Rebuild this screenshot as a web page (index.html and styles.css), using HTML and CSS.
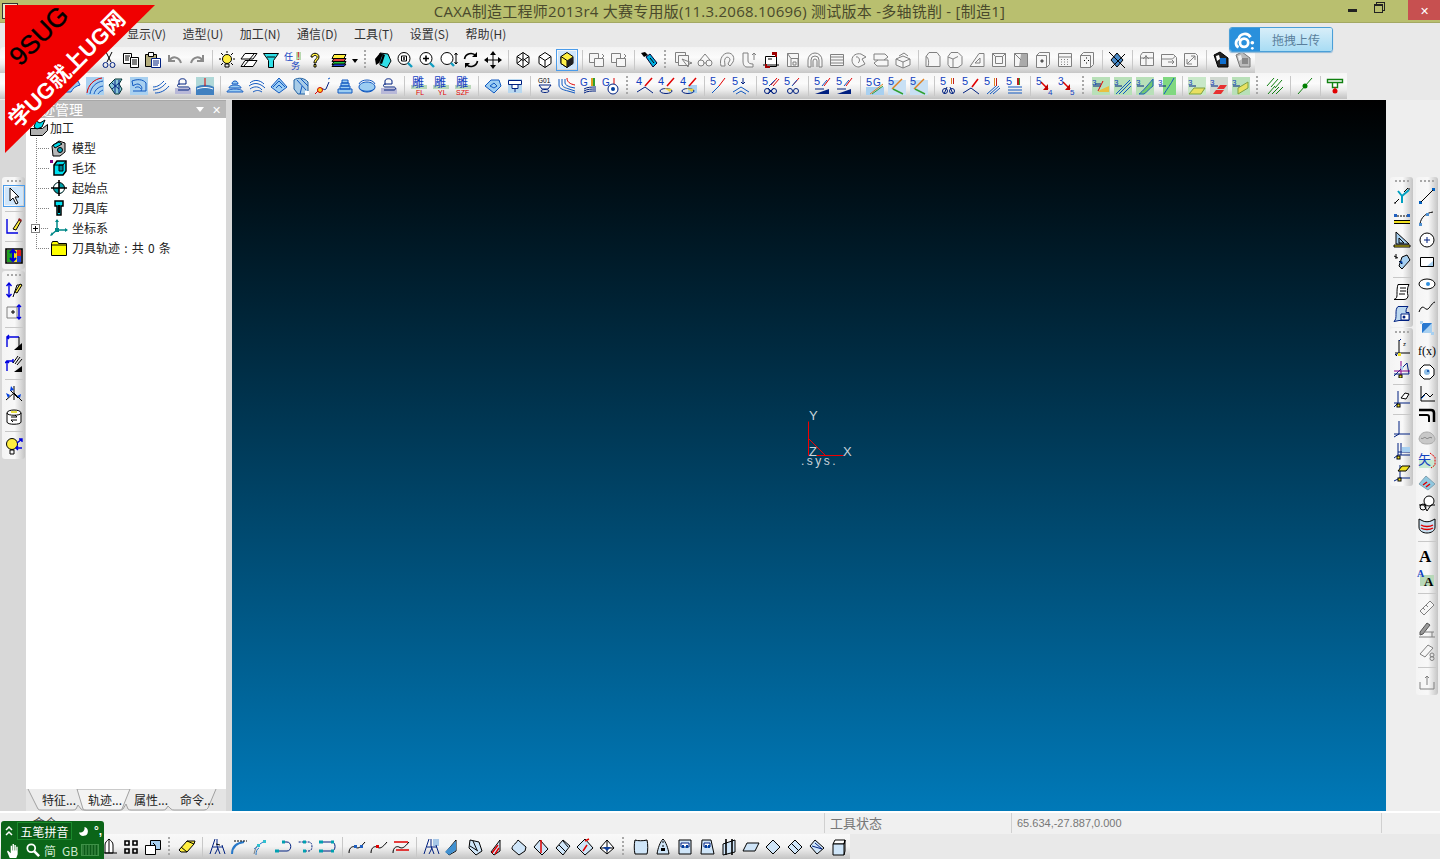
FILE: index.html
```html
<!DOCTYPE html>
<html lang="zh-CN">
<head>
<meta charset="utf-8">
<title>CAXA制造工程师2013r4</title>
<link rel="stylesheet" href="styles.css">
</head>
<body>
<svg class="defs" aria-hidden="true">
<symbol id="cut" viewBox="0 0 18 18"><path class="k" d="M7 11 12 1M11 11 6 1"/><circle class="nv" cx="5.5" cy="14" r="2.5"/><circle class="nv" cx="12.5" cy="14" r="2.5"/></symbol>
<symbol id="copy" viewBox="0 0 18 18"><path class="w" d="M1.5 2.5h8v10h-8z"/><path class="w" d="M8.5 6.5h8v10h-8z"/><path class="k" d="M3 5h5M3 7h4M3 9h4M10 9h5M10 11h5M10 13h5"/></symbol>
<symbol id="paste" viewBox="0 0 18 18"><path class="ol" d="M1.5 3.5h11v12h-11z"/><path class="w" d="M4.5 1.5h5v4h-5z"/><path class="nw" d="M7.5 7.5h9v9h-9z"/><path class="nv" d="M9 10h6M9 12h6M9 14h5"/></symbol>
<symbol id="undo" viewBox="0 0 18 18"><path class="gs2" d="M3 4v6h6M3.5 9.5C6 5 13 5 15 12"/></symbol>
<symbol id="redo" viewBox="0 0 18 18"><path class="gs2" d="M15 4v6H9M14.500 9.500C12 5 5 5 3 12"/></symbol>
<symbol id="bulb" viewBox="0 0 18 18"><circle class="y" cx="9" cy="8" r="4.500"/><path class="k" d="M7 13h4v3H7zM1 8h2M15 8h2M3 2l2 2M15 2l-2 2M3 14l2-2M15 14l-2-2M9 0v2"/></symbol>
<symbol id="zf" viewBox="0 0 18 18"><path class="w" d="M5 2.500h12L13 8H1z"/><path class="w" d="M5 9.500h12L13 15.500H1z"/><path class="k" d="M14 3 4 15"/></symbol>
<symbol id="fun" viewBox="0 0 18 18"><path class="c" d="M1.500 2.500h15l-5 7v7h-5v-7z"/><path class="k" d="M5 6h8"/></symbol>
<symbol id="task" viewBox="0 0 18 18"><rect x="12" y="1" width="5" height="8" fill="#b8d8b0"/></symbol>
<symbol id="help" viewBox="0 0 18 18"><path class="ty" d="M5 6c0-5 8-5 8 0 0 3-3 3-3 6H8c0-4 3-4 3-6s-4-2-4 0zM8 13.500h2v2.500H8z"/></symbol>
<symbol id="lay" viewBox="0 0 18 18"><path class="y" d="M4 3.500h12l-2 4H2z"/><path fill="#e04040" stroke="#000" d="M4 7.500h12l-2 3H2z"/><path fill="#20c040" stroke="#000" d="M4 10.500h12l-2 3H2z"/><path fill="#2040d0" stroke="#000" d="M4 13h12l-2 2.500H2z"/></symbol>
<symbol id="pan" viewBox="0 0 18 18"><path class="c" d="M6 2l8 1 3 7-4 7-7-3z"/><path fill="#000" d="M1 8l5-6 3 1-4 9-3 2zM9 3l2 1-3 9-2-1z"/></symbol>
<symbol id="zw" viewBox="0 0 18 18"><circle class="w" cx="8" cy="7.500" r="6"/><path class="k" d="M5.500 5h5v5h-5z"/><path fill="#444" d="M7 6h2v3H7z"/><path class="cb" d="M12 12l4 4"/></symbol>
<symbol id="zi" viewBox="0 0 18 18"><circle class="w" cx="8" cy="7.500" r="6"/><path class="k2" d="M5 7.500h6M8 4.500v6"/><path class="cb" d="M12 12l4 4"/></symbol>
<symbol id="zd" viewBox="0 0 18 18"><circle class="w" cx="7" cy="7.500" r="6"/><path class="cb" d="M11 12l3 3"/><path class="k" d="M16 2v11M14.500 4 16 2l1.500 2M14.500 11l1.500 2 1.500-2"/></symbol>
<symbol id="rot" viewBox="0 0 18 18"><path class="k2" d="M2.500 8A6.500 6.500 0 0 1 14 5M15.500 10A6.500 6.500 0 0 1 4 13"/><path d="M15 1v5h-5zM3 17v-5h5z"/></symbol>
<symbol id="mv" viewBox="0 0 18 18"><path class="k" d="M9 2v14M2 9h14"/><path d="M9 0l3 4H6zM9 18l3-4H6zM0 9l4-3v6zM18 9l-4-3v6z"/></symbol>
<symbol id="cw" viewBox="0 0 18 18"><path class="w" d="M9 1.500l6 4v7l-6 4-6-4v-7z"/><path class="k" d="M3 5.500l6 4 6-4M9 9.500v7M3 12.500l6-5 6 5M9 1.500v6"/></symbol>
<symbol id="ch" viewBox="0 0 18 18"><path class="w" d="M9 1.500l6 4v7l-6 4-6-4v-7z"/><path class="k" d="M3 5.500l6 4 6-4M9 9.500v7"/></symbol>
<symbol id="cs" viewBox="0 0 18 18"><path class="y" d="M9 1.500l6 4v7l-6 4-6-4v-7z"/><path fill="#fff24a" stroke="#000" d="M3 5.500l6 4v7l-6-4z"/><path fill="#202020" d="M9 9.500l6-4v7l-6 4z"/></symbol>
<symbol id="g2box" viewBox="0 0 18 18"><path class="gw" d="M1.500 2.500h9v9h-9z"/><path class="gw" d="M6.500 7.500h9v8h-9z"/><path class="gs" d="M14 3l2 2-2 2"/></symbol>
<symbol id="pen" viewBox="0 0 18 18"><path fill="#00b0e0" stroke="#003" d="M6 6l4-3 7 9-4 4z"/><path fill="#000" d="M1 2l4-1 3 3-4 2z"/><path class="k" d="M10 7l4 5"/></symbol>
<symbol id="g1" viewBox="0 0 18 18"><path class="gw" d="M1.500 1.500h10v10h-10z"/><path class="gw" d="M4.500 4.500h10v10h-10z"/><path class="gs" d="M8 8l6 8 1-3 3-1z"/></symbol>
<symbol id="g2" viewBox="0 0 18 18"><circle class="gw" cx="5" cy="12" r="3"/><circle class="gw" cx="13" cy="12" r="3"/><path class="gs" d="M8 12h2M4 9l5-6 5 6"/></symbol>
<symbol id="g3" viewBox="0 0 18 18"><path class="gw" d="M3 15C1 8 5 2 10 2s7 5 5 9l-3 4-2-2 2-4c0-3-4-4-5-1-1 2 0 4 0 7z"/></symbol>
<symbol id="g4" viewBox="0 0 18 18"><path class="gw" d="M3 2h5v8c0 2 2 3 5 3v3H7C4 16 3 13 3 10z"/><path class="gs" d="M14 2v7M12 4l2-2 2 2"/></symbol>
<symbol id="g5" viewBox="0 0 18 18"><path class="w" d="M3.500 5.500h11v10h-11z"/><path class="k" d="M1 14h16M6 8h4"/><path fill="#a00000" d="M10 1h5v5h-2V4h-3zM3 17v-4h2v2h3v2z"/></symbol>
<symbol id="g6" viewBox="0 0 18 18"><path class="gw" d="M3.500 2.500h11v13h-11z"/><path class="gs" d="M7 7.500h7v8M7 7.500v8M3.500 2.500l3.500 5M9 11h3v3H9z"/></symbol>
<symbol id="g7" viewBox="0 0 18 18"><path class="gw" d="M2 16V9a7 7 0 0 1 14 0v7h-3V9a4 4 0 0 0-8 0v7z"/><path class="gs" d="M7 16v-6a2 2 0 0 1 4 0v6"/></symbol>
<symbol id="g8" viewBox="0 0 18 18"><path class="gw" d="M2.500 3.500h13v11h-13z"/><path class="gs" d="M3 6h12M3 9h12M3 12h12"/></symbol>
<symbol id="g9" viewBox="0 0 18 18"><path class="gw" d="M2 9c0-5 5-7 9-6l5 3-4 2 3 5-6 3C5 16 2 13 2 9z"/><path class="gs" d="M6 6c3-1 5 4 2 6"/></symbol>
<symbol id="g10" viewBox="0 0 18 18"><path class="gw" d="M2 3h11l3 3-4 3h4v6H5L2 12l4-3H2z"/><path class="gs" d="M6 9h6"/></symbol>
<symbol id="g11" viewBox="0 0 18 18"><path class="gw" d="M2 8l7-3 7 3v6l-7 3-7-3z"/><path class="gs" d="M2 8l7 3 7-3M9 11v6M5 5l5-3 4 3"/></symbol>
<symbol id="s1" viewBox="0 0 18 18"><path class="gw" d="M5 1.500h8l3 4v10H2v-10z"/><path class="gs" d="M2 5.500c3 1 3 7 2 10"/></symbol>
<symbol id="s2" viewBox="0 0 18 18"><path class="gw" d="M5 1.500h7l4 4v8l-4 3H4l-2-3v-8z"/><path class="gs" d="M2 6l5 2 5-2.500M7 8v8"/></symbol>
<symbol id="s3" viewBox="0 0 18 18"><path class="gw" d="M2 15.500l9-13h5v13z"/><path class="gs" d="M7 12h5V7z"/></symbol>
<symbol id="s4" viewBox="0 0 18 18"><path class="gw" d="M2.500 2.500h13v13h-13z"/><path class="gs" d="M5.500 5.500h7v7h-7zM2.500 2.500l3 3M15.500 2.500l-3 3"/></symbol>
<symbol id="s5" viewBox="0 0 18 18"><path class="gw" d="M2.500 2.500h13v13h-13z"/><path fill="#aaa" d="M9 3h6v12H7z"/><path class="gs" d="M2.500 2.500 9 9"/></symbol>
<symbol id="s6" viewBox="0 0 18 18"><path class="gw" d="M2.500 4.500l3-3h10v12l-3 3h-10z"/><path fill="#555" d="M8 8l2 2-2 2-2-2z"/><path class="gs" d="M2.500 4.500h10v12"/></symbol>
<symbol id="s7" viewBox="0 0 18 18"><path class="gw" d="M2.500 2.500h13v13h-13z"/><path class="gs" d="M2.500 6h13M5 8.500h1M8 8.500h1M11 8.500h1M5 11h1M8 11h1M11 11h1M5 13.500h1M8 13.500h1M11 13.500h1"/></symbol>
<symbol id="s8" viewBox="0 0 18 18"><path class="gw" d="M2.500 4.500l3-3h10v12l-3 3h-10z"/><path class="k" d="M8 7h1M8 12h1M6 9.500h1M10 9.500h1"/><path class="gs" d="M2.500 4.500h10v12"/></symbol>
<symbol id="dia" viewBox="0 0 18 18"><path fill="#4a8ac8" stroke="#000" d="M9 2l6 7-6 7-6-7z"/><path class="k" d="M1 1l16 16M17 3 3 17"/></symbol>
<symbol id="h1" viewBox="0 0 18 18"><path class="gw" d="M2.500 4.500l2-3h11v13h-13z"/><path class="gs" d="M8 4v11M5 8l3-3 3 3M2.500 7h13"/></symbol>
<symbol id="h2" viewBox="0 0 18 18"><path class="gw" d="M1.500 3.500h12l3 3v9h-15z"/><path class="gs" d="M1.500 8h11l3-3M8 11h6M12 9l2 2-2 2"/></symbol>
<symbol id="h3" viewBox="0 0 18 18"><path class="gw" d="M2.500 2.500h11l2 2v11h-13z"/><path class="gs" d="M5 13 13 5M9 5h4v4M5 8v5h5"/></symbol>
<symbol id="dk" viewBox="0 0 18 18"><path fill="#222" stroke="#000" d="M2 4l6-3 8 6v9H6z"/><path fill="#1070d0" d="M8 7h6v6H8z"/><path fill="#fff" d="M4 5l3-1 1 4-3 2z"/></symbol>
<symbol id="dg" viewBox="0 0 18 18"><path fill="#bbb" stroke="#777" d="M2 4l6-3 8 6v9H6z"/><path fill="#888" d="M8 7h6v6H8z"/><path fill="#eee" d="M4 5l3-1 1 4-3 2z"/></symbol>
<symbol id="bq" viewBox="0 0 18 18"><path class="lb" d="M2 15c2-6 6-10 12-11l2 4c-4 1-7 3-9 7z"/></symbol>
<symbol id="b1" viewBox="0 0 18 18"><rect width="18" height="18" fill="#a8d0f0"/><path class="rs" d="M1 16C2 8 8 2 16 1"/><path class="bs" d="M4 17C5 10 10 5 17 4M8 17c1-4 4-7 9-8M12 17c1-2 3-3 5-4"/></symbol>
<symbol id="b2" viewBox="0 0 18 18"><path fill="#8ac8d8" stroke="#033" d="M1 8l6-6h7l-3 5 3 5-3 5H7z"/><path class="nv" d="M4 6l7 6M4 12l7-6M7 3v13M11 3v13"/></symbol>
<symbol id="b3" viewBox="0 0 18 18"><rect width="18" height="18" fill="#a8d0f0"/><path class="bs" d="M2 4c5-2 11-2 14 2v8H11c2-4 0-6-3-7-2 0-4 1-5 2zM3 14h8M5 11c2-2 5-1 6 1"/></symbol>
<symbol id="b4" viewBox="0 0 18 18"><path class="bs" d="M1 13C5 13 10 11 14 6M3 16c5 0 10-2 14-7M1 10c5 0 8-3 11-6"/></symbol>
<symbol id="b5" viewBox="0 0 18 18"><rect x="1" y="11" width="16" height="6" fill="#b8b8d8"/><path class="nv" d="M5 8V4c0-3 7-3 7 0v3H5c-2 0-2 3 0 3h9c2 0 2 3 0 3H4"/></symbol>
<symbol id="b6" viewBox="0 0 18 18"><rect width="18" height="18" fill="#b0d8d8"/><path fill="#4080c0" d="M0 10c6-3 12-3 18 0v8H0z"/><path class="rs" d="M9 1v8"/><path stroke="#fff" fill="none" d="M1 12c5-2 11-2 16 0"/></symbol>
<symbol id="p1" viewBox="0 0 18 18"><path class="lb" d="M6 7c0-4 6-4 6 0zM3 11c0-2 3-3 6-3s6 1 6 3zM1 15c0-2 4-3 8-3s8 1 8 3z"/></symbol>
<symbol id="p2" viewBox="0 0 18 18"><path class="bs" d="M2 6c4-4 10-3 14 1M1 9c5-4 11-3 16 2M2 12c4-3 9-3 12 1M5 15c3-2 6-2 9 0"/></symbol>
<symbol id="p3" viewBox="0 0 18 18"><path class="lb" d="M9 1l8 9-8 6-8-6z"/><path class="bs" d="M3 10l6-6 6 6M6 11l3-3 3 3"/></symbol>
<symbol id="p4" viewBox="0 0 18 18"><path fill="#a8cce8" stroke="#2060a0" d="M2 3c4-3 11-2 14 2v9l-3 3H6L2 12z"/><path class="bs" d="M5 3l9 10M9 2l7 7M10 9l-2 8"/><path fill="#fff" d="M13 14h4v4h-4z"/></symbol>
<symbol id="p5" viewBox="0 0 18 18"><path class="nv" d="M1 17l5-5c2-2 4 2 6 0l3-7"/><path class="rs" d="M1 17l5-5"/><circle cx="6" cy="13" r="2.500" fill="#ffd020" stroke="#c00"/><path class="bs" d="M14 2l2-1"/></symbol>
<symbol id="p6" viewBox="0 0 18 18"><path class="lb" d="M6 3h6v3H6zM5 6h8v3H5zM4 9h10v3H4zM2 12h14v4H2z"/></symbol>
<symbol id="p7" viewBox="0 0 18 18"><path class="lb" d="M1 10c0-3 4-5 8-5s8 2 8 5-4 5-8 5-8-2-8-5z"/><path class="bs" d="M1 7c1-3 5-4 8-4s7 1 8 4M2 12c3 3 11 3 14 0"/></symbol>
<symbol id="diao" viewBox="0 0 18 18"><rect x="1" y="8" width="16" height="4" fill="#b8d8b8"/></symbol>
<symbol id="c1" viewBox="0 0 18 18"><path class="lb" d="M1 9l6-6h8l2 6-7 7z"/><path class="bs" d="M6 9l4-3 3 3-3 2z"/></symbol>
<symbol id="c2" viewBox="0 0 18 18"><rect x="2" y="2" width="14" height="14" fill="#b8d8f0"/><path class="nw" d="M2.500 3.500h13v4h-13zM6 7.500h6v4H6z"/><path class="nv" d="M9 12v3"/></symbol>
<symbol id="g01" viewBox="0 0 18 18"><path class="nv" d="M3 8h12M3 8l3 4h6l3-4M5 14c0-2 8-2 8 0s-8 2-8 0z"/></symbol>
<symbol id="c3" viewBox="0 0 18 18"><path class="bs" d="M1 2v6c0 4 5 5 9 6l7 2M4 2v5c0 3 4 4 7 5l6 2M7 2v4c0 2 3 3 5 4l5 1"/><path class="rs" d="M9 1c0 4 3 6 8 7"/></symbol>
<symbol id="c4" viewBox="0 0 18 18"><path fill="#e0a020" d="M11 1h2v8h-2z"/><path fill="#30a030" d="M13 1h2v8h-2z"/><path class="nv" d="M4 12c3-2 8-2 12-2M4 14c3-2 8-2 12-2M4 16c3-2 8-2 12-2"/></symbol>
<symbol id="c5" viewBox="0 0 18 18"><path class="rs" d="M12 1v6"/><circle class="nw" cx="11" cy="12" r="5"/><circle cx="11" cy="12" r="2" fill="#0040a0"/></symbol>
<symbol id="a4" viewBox="0 0 18 18"><path class="rs2" d="M9 9l7-8"/><path class="nv" d="M1 15l8-5 8 6"/></symbol>
<symbol id="a4b" viewBox="0 0 18 18"><path class="rs2" d="M9 9l7-8"/><ellipse class="nv" cx="8" cy="14" rx="6" ry="2.500"/><path fill="#e8d040" d="M6 11l8 1-2 3z"/></symbol>
<symbol id="a4c" viewBox="0 0 18 18"><rect x="8" y="8" width="9" height="8" fill="#a8d0f0"/><path class="rs2" d="M9 9l7-8"/><ellipse class="nv" cx="8" cy="14" rx="6" ry="2.500"/><path fill="#e8d040" d="M6 11l8 1-2 3z"/></symbol>
<symbol id="a5" viewBox="0 0 18 18"><path class="bs" d="M2 16l7-7"/><path class="rs" d="M9 9l6-8"/></symbol>
<symbol id="a5p" viewBox="0 0 18 18"><path class="nv" d="M11 1v6M9 5l2 2 2-2"/><path class="bs" d="M1 15l8-5 8 5M4 17l5-3 5 3"/></symbol>
<symbol id="a5c" viewBox="0 0 18 18"><path class="rs" d="M9 8l6-7M11 9l6-7"/><path class="bs" d="M7 9l6-6"/><path class="nv" d="M6 11l6 6M12 11l-6 6"/><circle class="nv" cx="5" cy="14" r="2.500"/><circle class="nv" cx="12" cy="14" r="2.500"/></symbol>
<symbol id="a5d" viewBox="0 0 18 18"><path class="rs" d="M9 8l6-7"/><path class="bs" d="M8 9l5-6"/><circle class="nv" cx="6" cy="14" r="2.500"/><circle class="nv" cx="12" cy="14" r="2.500"/></symbol>
<symbol id="a5f" viewBox="0 0 18 18"><path class="rs" d="M10 9l6-8"/><path class="bs" d="M8 9l5-6"/><path fill="#002080" d="M1 17l14-5v5z"/><path class="nv" d="M1 12h9"/></symbol>
<symbol id="a5s" viewBox="0 0 18 18"><rect y="10" width="18" height="8" fill="#a8d0f0"/><path fill="none" stroke="#e08020" d="M4 17 17 7"/><path fill="none" stroke="#30a030" d="M6 17 17 9"/></symbol>
<symbol id="a5v" viewBox="0 0 18 18"><rect y="3" width="18" height="15" fill="#c8e0f4"/><path fill="none" stroke="#e08020" stroke-width="1.500" d="M4 12 14 2"/><path fill="none" stroke="#30a030" stroke-width="1.500" d="M5 12 15 17"/></symbol>
<symbol id="a5h" viewBox="0 0 18 18"><path fill="#e08020" d="M11 1h1v6h-1z"/><path fill="#c02020" d="M13 1h1v6h-1z"/><path class="nv" d="M7 10l-3 7M10 10l3 7"/><circle class="nv" cx="5" cy="14" r="2.500"/><circle class="nv" cx="12" cy="14" r="2.500"/></symbol>
<symbol id="a5m" viewBox="0 0 18 18"><path class="rs2" d="M10 10l6-8"/><path class="nv" d="M1 16l8-5 8 6"/></symbol>
<symbol id="a5l" viewBox="0 0 18 18"><path fill="#e08020" d="M10 1h1v8h-1z"/><path fill="#c02020" d="M12 1h1v8h-1z"/><path class="bs" d="M3 17 12 9M6 17l9-8M9 17l7-6"/></symbol>
<symbol id="a5e" viewBox="0 0 18 18"><path fill="#c02020" d="M11 1h2v7h-2z"/><path fill="#30a030" d="M13 1h1v7h-1z"/><path class="bs" d="M2 10h14M2 13h14M2 16h14"/></symbol>
<symbol id="axd" viewBox="0 0 18 18"><path class="rs2" d="M5 5l7 7"/><path fill="#c00000" d="M12 7v6H7z"/></symbol>
<symbol id="t1" viewBox="0 0 18 18"><rect width="18" height="18" fill="#b8e0b8"/><path class="nv" d="M1 9h8M3 7h6"/><path class="rs" d="M11 4 6 14"/><path fill="#e8c040" d="M8 13l9-4v6H6z"/></symbol>
<symbol id="t2" viewBox="0 0 18 18"><rect width="18" height="18" fill="#b8e0b8"/><path class="nv" d="M1 9h7"/><path class="bs" d="M2 17 16 3M5 17 17 5M9 17l8-8"/></symbol>
<symbol id="t3" viewBox="0 0 18 18"><rect width="18" height="18" fill="#b8e0b8"/><path class="nv" d="M1 9h7"/><path fill="#70c870" stroke="#2060c0" d="M3 17c4-3 8-8 14-15v7c-4 3-6 6-9 8z"/></symbol>
<symbol id="t4" viewBox="0 0 18 18"><rect x="5" width="13" height="18" fill="#80d880"/><path class="nv" d="M1 9h7"/><path class="bs" d="M6 17C9 12 13 7 16 1"/></symbol>
<symbol id="t5" viewBox="0 0 18 18"><rect width="18" height="18" fill="#c8e8c8"/><path class="nv" d="M1 9h7"/><path fill="#e8e060" stroke="#80a040" d="M6 11h11l-4 6H1z"/></symbol>
<symbol id="t6" viewBox="0 0 18 18"><rect width="18" height="18" fill="#d0d8d0"/><path class="nv" d="M1 9h7"/><path fill="#e83030" d="M10 8h7l-3 4H7zM6 13h8l-3 4H3z"/></symbol>
<symbol id="t7" viewBox="0 0 18 18"><rect width="18" height="18" fill="#b8e0b8"/><path class="nv" d="M1 9h7"/><path fill="#e8e060" stroke="#80a040" d="M6 11l10-6v6L6 17z"/></symbol>
<symbol id="hat" viewBox="0 0 18 18"><path class="gs3" d="M1 9 8 1M5 10l7-8M9 11l7-8M2 17 9 9M6 17l7-7M10 17l7-7"/></symbol>
<symbol id="gd" viewBox="0 0 18 18"><path class="gs3" d="M2 17 16 1"/><circle cx="9" cy="9" r="2.500" fill="#008000"/></symbol>
<symbol id="ft" viewBox="0 0 18 18"><path class="gs3w" d="M1.500 2.500h15v3h-15zM6.500 5.500h5v5h-5z"/><path class="rs" d="M9 10v4"/><circle cx="9" cy="14" r="2.500" fill="#e00000"/></symbol>
<symbol id="sel" viewBox="0 0 18 18"><path class="w" d="M5 1v13l3-3 3 6 2-1-3-6h4z"/></symbol>
<symbol id="lp" viewBox="0 0 18 18"><path class="bl2" d="M2 2v14h11"/><path class="y" d="M8 12l6-9 2 1-5 9z"/><path fill="#902020" d="M14 1l3 2-1 2-3-2z"/></symbol>
<symbol id="col" viewBox="0 0 18 18"><path class="k2" d="M1 2h16v14H1z"/><rect x="2" y="3" width="5" height="12" fill="#20a020"/><rect x="7" y="3" width="5" height="12" fill="#f0e020"/><rect x="12" y="3" width="4" height="6" fill="#e02020"/><rect x="12" y="9" width="4" height="6" fill="#2040e0"/><path fill="none" stroke="#0000d0" stroke-width="2" d="M8 3v11M5 6l3-3 3 3M5 11l3 3 3-3"/></symbol>
<symbol id="lv1" viewBox="0 0 18 18"><path class="bl2" d="M4 2v14M1.500 5 4 2l2.500 3M1.500 13 4 16l2.500-3"/><path class="k" d="M8 16l4-12h5"/><path class="y" d="M10 11l5-8 2 1-5 8z"/></symbol>
<symbol id="lv2" viewBox="0 0 18 18"><path class="gw" d="M2 4h10v11H2z"/><path class="bl2" d="M14 2v14M12 4l2-2 2 2M12 14l2 2 2-2"/><path class="k" d="M6 9h4M8 7v4"/></symbol>
<symbol id="lv3" viewBox="0 0 18 18"><path class="bl2" d="M2 14V4h12M4 6 2 4l2-2"/><path class="k" d="M14 4v12"/><path d="M17 10v7H9z"/></symbol>
<symbol id="lv4" viewBox="0 0 18 18"><path class="bl2" d="M2 16V6h6M0 8l2-2 2 2M8 4v4"/><path class="k" d="M10 9l5-7M8 8l5-7M12 10l5-6"/><path d="M17 11v6H9z"/></symbol>
<symbol id="lv5" viewBox="0 0 18 18"><path class="k" d="M1 15 9 8l8 8M9 1v14M5 5l8 8"/><path class="bl" d="M6 1l3 4-4 1zM1 8l4 2-2 3zM16 9l-4 2 3 2z"/></symbol>
<symbol id="lv6" viewBox="0 0 18 18"><path class="w" d="M2 6c0-4 14-4 14 0v9c0 3-14 3-14 0z"/><path class="k" d="M2 6c0 3 14 3 14 0M6 10h6l-2-2M12 13H6l2 2"/><path fill="#e8e040" d="M6 4h6v2H6z"/></symbol>
<symbol id="lv7" viewBox="0 0 18 18"><circle class="y" cx="7" cy="7" r="5.500"/><path class="k" d="M5 13h4v4H5z"/><path class="bl2" d="M17 2l-5 4M14 2h3v3M17 11h-6M13 9l-2 2 2 2"/></symbol>
<symbol id="r1" viewBox="0 0 18 18"><path d="M1 16l1-1 1 1-1 1zM15 2l1-1 1 1-1 1z"/><path fill="none" stroke="#00a0c0" stroke-width="2" d="M9 9v7M9 9l7-6M9 9 5 4"/><path class="k" d="M2 16l4-4M11 5l4-4"/></symbol>
<symbol id="r2" viewBox="0 0 18 18"><path class="k" d="M4 7h10" stroke-dasharray="2 1"/><rect x="1" y="5" width="3" height="3" fill="#2060c0"/><rect x="14" y="5" width="3" height="3" fill="#2060c0"/><path d="M1 11h16v1H1zM1 14h16v1H1z"/><path fill="#f0e020" d="M1 12h16v2H1z"/></symbol>
<symbol id="r3" viewBox="0 0 18 18"><path fill="#a8d0f0" stroke="#000" d="M3 1v12h13z"/><path class="k" d="M6 7v5h5z"/><path fill="#f0e020" stroke="#000" d="M1 14h16v2H1z"/></symbol>
<symbol id="r4" viewBox="0 0 18 18"><path fill="#a8d0f0" stroke="#000" d="M9 4l5-2 3 5-8 9-3-3z"/><path class="k" d="M1 3l4 2M3 1v5M6 8l3 3"/><path fill="#0040b0" d="M6 9l3-1 1 3z"/></symbol>
<symbol id="r5" viewBox="0 0 18 18"><path class="w" d="M5 1.500h11c-2 3-2 9-1 11 0 2-1 4-4 4H1c3-1 3-3 3-5 0-4 0-7 1-10z"/><path class="k" d="M7 5h6M7 8h6M6 11h6"/></symbol>
<symbol id="r6" viewBox="0 0 18 18"><path fill="#bcd8f0" stroke="#002080" d="M5 1.500h10c-2 2-2 4-2 6h3v8H6l-5 1c2-2 2-4 2-7 0-4 0-6 2-8z"/><path class="nw" d="M8 9h8v6H8z"/><circle cx="11" cy="12" r="1.500" fill="#002080"/></symbol>
<symbol id="r7" viewBox="0 0 18 18"><path class="k" d="M2 15h15M6 2v16M2 16l2 2"/><path class="nv" d="M6 15 2 17M6 3 8 1"/><rect x="5" y="15" width="3" height="3" fill="#f0e020"/></symbol>
<symbol id="r8" viewBox="0 0 18 18"><path class="nv" d="M1 16 14 3 16 14H1"/><path stroke="#808" fill="none" d="M8 1v15M1 11h16"/><path fill="#a8d0f0" d="M7 6l4 1-2 4z"/><rect x="6" y="15" width="3" height="3" fill="#f0e020" stroke="#000"/></symbol>
<symbol id="r9" viewBox="0 0 18 18"><path class="nv" d="M5 1v12H1m16 0H5l-4 4"/><path class="w" d="M8 8l4-5 4 1-3 5z"/><rect x="4" y="14" width="3" height="3" fill="#f0e020" stroke="#000"/></symbol>
<symbol id="r10" viewBox="0 0 18 18"><path class="nv" d="M6 1v13M1 14h16M6 14 1 17"/></symbol>
<symbol id="r11" viewBox="0 0 18 18"><path class="nv" d="M8 1v12M5 1v12H17M1 16l4-3M5 10h12"/><path fill="#a8d0f0" d="M9 5h8v5H9z"/><rect x="4" y="14" width="3" height="3" fill="#f0e020" stroke="#000"/></symbol>
<symbol id="r12" viewBox="0 0 18 18"><path class="nv" d="M7 1v13H17M1 17l6-3"/><path fill="#f0e020" stroke="#000" d="M5 7l4-5h8l-4 5z"/><rect x="5" y="14" width="3" height="3" fill="#f0e020" stroke="#000"/></symbol>
<symbol id="q1" viewBox="0 0 18 18"><path class="bs" d="M2 16 16 2"/><rect x="1" y="14" width="3" height="3" fill="#0060c0"/><rect x="14" y="1" width="3" height="3" fill="#0060c0"/><path class="k" d="M3 15 15 3"/></symbol>
<symbol id="q2" viewBox="0 0 18 18"><path class="k" d="M2 15C3 8 8 4 15 3"/><rect x="1" y="14" width="3" height="3" fill="#5090d0"/><rect x="8" y="4" width="3" height="3" fill="#5090d0"/></symbol>
<symbol id="q3" viewBox="0 0 18 18"><circle class="w" cx="9" cy="9" r="7"/><path class="nv" d="M6 9h6M9 6v6"/></symbol>
<symbol id="q4" viewBox="0 0 18 18"><path class="w" d="M2.500 4.500h13v9h-13z"/><path fill="#a8d0f0" d="M9 13l6-5v5z"/></symbol>
<symbol id="q5" viewBox="0 0 18 18"><ellipse class="w" cx="9" cy="9" rx="8" ry="5"/><circle cx="10" cy="9" r="2" fill="#3090e0"/></symbol>
<symbol id="q6" viewBox="0 0 18 18"><path class="k" d="M1 15c3-8 5-4 7-3 3 2 5-6 9-7"/></symbol>
<symbol id="q7" viewBox="0 0 18 18"><rect x="4" y="4" width="10" height="10" fill="#2878d0"/><path fill="#a8d0f0" d="M4 14l10-10v10z"/><rect x="2" y="2" width="3" height="3" fill="#a8d0f0"/><rect x="13" y="13" width="3" height="3" fill="#a8d0f0"/></symbol>
<symbol id="q9" viewBox="0 0 18 18"><path class="w" d="M6 2h6l4 4v6l-4 4H6l-4-4V6z"/><circle cx="9" cy="9" r="3" fill="#90c0e8"/><circle cx="10" cy="8" r="1" fill="#0040a0"/></symbol>
<symbol id="q10" viewBox="0 0 18 18"><path class="k" d="M3 1v15h14M3 13l5-5 4 4 3-3"/><path class="bs" d="M3 14l4-4"/></symbol>
<symbol id="q11" viewBox="0 0 18 18"><path fill="none" stroke="#000" stroke-width="2.500" d="M1 3h12c2 0 3 1 3 3v9"/><path fill="none" stroke="#000" stroke-width="2" d="M1 8h8c1 0 2 1 2 2v5"/></symbol>
<symbol id="q12" viewBox="0 0 18 18"><path fill="#c8c8c8" stroke="#aaa" d="M1 10c1-5 4-7 8-7s7 3 8 7c-1 4-4 5-8 5s-7-1-8-5z"/><path class="gs" d="M3 9c2 2 3-2 5 0s3-2 6 0"/></symbol>
<symbol id="q13" viewBox="0 0 18 18"><path fill="#c8e8d0" d="M1 9h16v8H1z"/><path class="rs" d="M12 2l5 4v8l-4 3" stroke-dasharray="2 1"/></symbol>
<symbol id="q14" viewBox="0 0 18 18"><path fill="#90c8e0" stroke="#80a0b0" d="M1 11l7-8 9 8-7 6z"/><path class="rs2" d="M5 12l4-3M8 14l4-3"/></symbol>
<symbol id="q15" viewBox="0 0 18 18"><circle class="w" cx="11" cy="6" r="5"/><path class="k" d="M1 10h5l3 6 4-6h4"/><circle class="k" cx="5" cy="12" r="3"/></symbol>
<symbol id="q16" viewBox="0 0 18 18"><path fill="#c8e0f0" stroke="#000" d="M1 2l4 2c2 1 6 1 8 0l4-2v8c0 4-4 6-8 6s-8-2-8-6z"/><path class="rs2" d="M3 8c3 2 9 2 12 0M3 11c3 2 9 2 12 0"/></symbol>
<symbol id="tbg" viewBox="0 0 18 18"><rect x="2" y="6" width="14" height="11" fill="#b8d8b8"/></symbol>
<symbol id="d1" viewBox="0 0 18 18"><path class="gw" d="M2 12 12 2l4 4L6 16z"/><path class="gs" d="M5 9l2 2M8 6l2 2"/></symbol>
<symbol id="d2" viewBox="0 0 18 18"><path fill="#999" stroke="#555" d="M2 11l7-9 3 2-7 9-3 1z"/><path class="gs" d="M1 16h16M14 11v5M7 11h9"/></symbol>
<symbol id="d3" viewBox="0 0 18 18"><path class="gw" d="M2 11l8-9 5 3-8 9z"/><circle class="gs" cx="14" cy="12" r="2"/><circle class="gs" cx="14" cy="15.500" r="2"/></symbol>
<symbol id="d4" viewBox="0 0 18 18"><path class="gs" d="M2 9v7h14V9M9 3v9M7 5l2-2 2 2"/></symbol>
<symbol id="bell" viewBox="0 0 18 18"><path class="w" d="M5 15V7c0-3 2-4 4-6 2 2 4 3 4 6v8z"/><path class="k" d="M1 15h16M9 1v14"/></symbol>
<symbol id="four" viewBox="0 0 18 18"><path class="k2" d="M3 3h4v4H3zM11 3h4v4h-4zM3 11h4v4H3zM11 11h4v4h-4z"/></symbol>
<symbol id="ovl" viewBox="0 0 18 18"><path fill="#a8d0f0" stroke="#000" d="M6.500 2.500h10v9h-10z"/><path class="w" d="M1.500 7.500h10v9h-10z"/><path class="k" d="M9 5l2 2"/></symbol>
<symbol id="era" viewBox="0 0 18 18"><path class="y" d="M1 12 9 3h8l-1 3-7 8H3z"/><path class="k" d="M3 9l6 5M9 3l7 3"/></symbol>
<symbol id="v1" viewBox="0 0 18 18"><path class="nv" d="M7 1 2 16M9 1v7l3 8M5 9h10M14 7l3 9M7 16l3-6"/><path class="k" d="M8 6l4 1"/></symbol>
<symbol id="v2" viewBox="0 0 18 18"><path stroke="#2878c8" stroke-width="2" fill="none" d="M2 16c0-7 4-11 12-12"/><path class="k" d="M4 3h13" stroke-dasharray="2 1"/></symbol>
<symbol id="v3" viewBox="0 0 18 18"><path class="gs" d="M2 16C3 12 4 8 7 6"/><rect x="5" y="6" width="3" height="3" fill="#30c0d0"/><rect x="11" y="2" width="3" height="3" fill="#30c0d0"/><path stroke="#2878c8" fill="none" d="M8 6l3-2M2 11l3-2M4 17c0-4 1-6 3-7"/></symbol>
<symbol id="v4" viewBox="0 0 18 18"><path class="nv" d="M4 13h9c5 0 5-9 0-9H9"/><rect x="1" y="11.500" width="4" height="3" fill="#00a0b0"/><rect x="8" y="2.500" width="3" height="3" fill="#00a0b0"/></symbol>
<symbol id="v5" viewBox="0 0 18 18"><path class="nv" d="M9 13h4c4 0 4-9 0-9H2" stroke-dasharray="2 1"/><rect x="7" y="11.500" width="3" height="3" fill="#00a0b0"/><rect x="7" y="2.500" width="3" height="3" fill="#00a0b0"/></symbol>
<symbol id="v6" viewBox="0 0 18 18"><path class="nv" d="M3 4h11c4 0 4 9 0 9H3"/><rect x="1" y="2.500" width="4" height="3" fill="#00a0b0"/><rect x="1" y="11.500" width="4" height="3" fill="#00a0b0"/><rect x="13" y="2.500" width="3" height="3" fill="#00a0b0"/><rect x="13" y="11.500" width="3" height="3" fill="#00a0b0"/></symbol>
<symbol id="v7" viewBox="0 0 18 18"><path class="k" d="M1 15c0-6 4-7 6-6 3 2 5 1 10-5"/><rect x="6" y="7" width="3" height="3" fill="#2060c0"/><rect x="12" y="7" width="3" height="3" fill="#2060c0"/></symbol>
<symbol id="v8" viewBox="0 0 18 18"><path class="k" d="M1 15c0-6 4-7 6-6 3 2 5 1 10-5"/><rect x="6" y="7" width="3" height="3" fill="#e00000"/></symbol>
<symbol id="v9" viewBox="0 0 18 18"><path class="k" d="M1 15c0-6 4-7 6-6 3 2 5 1 10-5"/><path class="rs2" d="M2 4h14M4 12h13"/></symbol>
<symbol id="v10" viewBox="0 0 18 18"><path fill="#a8c8e8" d="M11 1h6v7h-6z"/><path class="nv" d="M7 1 2 16M9 1v7l3 8M5 9h10M14 7l3 9M7 16l3-6"/></symbol>
<symbol id="sf1" viewBox="0 0 18 18"><path class="lbk" d="M12 2v11l-7 4-3-3z"/><path fill="#4090d0" d="M1 14l11-11v9l-7 5z"/></symbol>
<symbol id="sf2" viewBox="0 0 18 18"><path class="lbk" d="M4 2l9 2 3 9-6 4-7-7z"/><path class="k" d="M7 3l4 9M4 8l8 5"/></symbol>
<symbol id="sf3" viewBox="0 0 18 18"><path class="lbk" d="M12 2v11l-6 4-3-3z"/><path class="rs2" d="M4 15l6-8M7 16l4-6"/></symbol>
<symbol id="sf4" viewBox="0 0 18 18"><path class="lbk" d="M8 2l8 7-1 4-6 4-7-6c0-4 3-4 6-9z"/></symbol>
<symbol id="sf5" viewBox="0 0 18 18"><path class="lbk" d="M8 2l8 9-6 6-8-8z"/><path class="rs2" d="M9 2v13"/></symbol>
<symbol id="sf6" viewBox="0 0 18 18"><path class="lbk" d="M2 10l7-8 7 6-7 9z"/><path class="k" d="M5 7l7 7M9 3l5 6"/></symbol>
<symbol id="sf7" viewBox="0 0 18 18"><path class="lbk" d="M9 1l8 9-8 7-8-8z"/><path class="rs2" d="M9 3l4-2M7 13l4-6"/></symbol>
<symbol id="sf8" viewBox="0 0 18 18"><path class="w" d="M9 2l7 8-7 6-7-6z"/><path class="k" d="M9 2v14M2 10h14"/><path fill="#1040a0" d="M5 9h8l-4 4z"/></symbol>
<symbol id="e1" viewBox="0 0 18 18"><path class="lbk" d="M3 2c3 1 8 1 12 0 1 4 1 11 0 14H3c-1-4-1-10 0-14z"/></symbol>
<symbol id="e2" viewBox="0 0 18 18"><path class="lbk" d="M9 1c3 3 5 9 6 15H3C4 10 6 4 9 1z"/><path class="k" d="M9 3v2M9 7v2M9 11v2"/><path fill="#000" d="M7 10h4v3H7z"/></symbol>
<symbol id="e3" viewBox="0 0 18 18"><path class="lbk" d="M3 2h12v14H3z"/><path class="nw" d="M5 5h8v4H5z"/><path d="M6 7h2v3H6zM10 7h2v3h-2z" fill="#0040a0"/></symbol>
<symbol id="e4" viewBox="0 0 18 18"><path class="lbk" d="M4 2h9l3 14H3z"/><path class="nw" d="M6 5h6v4H6z"/><path d="M7 7h2v3H7zM10 7h2v3h-2z" fill="#0040a0"/></symbol>
<symbol id="e5" viewBox="0 0 18 18"><path class="lbk" d="M3 6l12-4v12L3 17z"/><path class="k2" d="M6 1v16M12 1v16"/></symbol>
<symbol id="e6" viewBox="0 0 18 18"><path class="lbk" d="M5 5h12l-4 8H1z"/></symbol>
<symbol id="e7" viewBox="0 0 18 18"><path class="lbk" d="M9 2l7 7-7 7-7-7z"/></symbol>
<symbol id="e8" viewBox="0 0 18 18"><path class="lbk" d="M9 2l7 7-7 7-7-7z"/><path class="k" d="M5 5l7 7"/></symbol>
<symbol id="e9" viewBox="0 0 18 18"><path class="lbk" d="M7 2l9 8-7 6-7-8z"/><path class="nv" d="M4 8l10 3M7 5l7 6"/></symbol>
<symbol id="e10" viewBox="0 0 18 18"><path class="w" d="M3 6l2-4h10l-1 4z"/><path class="lbk" d="M3 6h11v11H3z"/><path class="k" d="M14 6l1-4v11l-1 4"/></symbol>
<symbol id="tr-root" viewBox="0 0 20 20"><path fill="#b0b0b0" stroke="#000" d="M1.500 10.500h12l5-4v6l-5 5h-12z"/><path fill="#00d8e8" stroke="#000" d="M5 9l2-6 4 2 5-3-3 7-5 2z"/></symbol>
<symbol id="tr-model" viewBox="0 0 18 18"><path fill="#b8b8b8" stroke="#000" d="M2 7l7-5 6 2v9l-5 4H3z"/><path fill="#00d8e8" stroke="#000" d="M3 6l6-3 3 2-7 4z"/><circle fill="#00a8c0" stroke="#000" cx="10" cy="11" r="2.500"/></symbol>
<symbol id="tr-blank" viewBox="0 0 18 18"><rect x="0" y="1" width="3" height="3" fill="#800080"/><path fill="#00e0f0" stroke="#000" stroke-width="1.500" d="M4 6l3-4h9v10l-3 4H4z"/><path fill="#008090" stroke="#000" d="M9 6h4v6H9zM13 6l3-4"/><path class="k" d="M4 6h9"/></symbol>
<symbol id="tr-start" viewBox="0 0 18 18"><circle cx="9" cy="9" r="5.500" fill="#00a0a8" stroke="#000"/><path fill="#fff" d="M9 4a5 5 0 0 0-5 5h5zM9 14a5 5 0 0 0 5-5H9z"/><path class="k2" d="M9 1v16M1 9h16"/></symbol>
<symbol id="tr-tool" viewBox="0 0 18 18"><path fill="#00e0f0" stroke="#000" stroke-width="1.500" d="M5 2h8v5h-2v9H7V7H5z"/><path fill="#000" d="M8 6h2v8H8z"/></symbol>
<symbol id="tr-sys" viewBox="0 0 18 18"><path fill="none" stroke="#008888" stroke-width="1.500" d="M7 1v10L1 16M7 11h10"/><path d="M7 0l2 3H5zM18 11l-3-2v4zM0 17l3-1-1-3z" fill="#008888"/><rect x="5" y="9" width="4" height="4" fill="#008888"/></symbol>
<symbol id="tr-fold" viewBox="0 0 18 18"><path fill="#ffff00" stroke="#000" d="M1.500 4.500l1-2h5l1 2h8v12h-15z"/><path class="k" d="M2 6h14"/></symbol>
<symbol id="cloud" viewBox="0 0 24 24"><path fill="none" stroke="#fff" stroke-width="3" d="M5 20a5 5 0 0 1 0-9 7 7 0 0 1 13-2"/><circle fill="none" stroke="#fff" stroke-width="3" cx="11" cy="15" r="4.500"/><circle cx="20" cy="15" r="2" fill="#fff"/><circle cx="20" cy="21" r="1.500" fill="#fff"/></symbol>
<symbol id="im-hand" viewBox="0 0 14 16"><path fill="#fff" d="M3 16 0 9l1-1 3 3V3h1.500v5H6V1h1.500v7H8V2h1.500v6h.5V4h1.500v8L10 16z"/></symbol>
<symbol id="im-mag" viewBox="0 0 16 16"><circle fill="none" stroke="#fff" stroke-width="2" cx="6" cy="6" r="4.500"/><path fill="none" stroke="#fff" stroke-width="3" d="M9.500 9.500 15 15"/></symbol>
<symbol id="im-moon" viewBox="0 0 10 10"><path fill="#fff" d="M6 0a5 5 0 1 1-6 6c4 1 7-2 6-6z"/></symbol>
<symbol id="im-up" viewBox="0 0 8 10"><path fill="none" stroke="#fff" stroke-width="1.500" d="M1 4l3-3 3 3M1 9l3-3 3 3"/></symbol>
</svg>

<div class="app">
  <header class="titlebar">
    <span class="appicon"></span>
    <h1 class="title">CAXA制造工程师2013r4 大赛专用版(11.3.2068.10696) 测试版本 -多轴铣削 - [制造1]</h1>
    <div class="winbtns">
      <span class="wb"><span class="wmin"></span></span>
      <span class="wb"><span class="wres"></span></span>
      <span class="wb wclose">✕</span>
    </div>
  </header>

  <nav class="menubar">
    <span>显示(V)</span><span>造型(U)</span><span>加工(N)</span><span>通信(D)</span><span>工具(T)</span><span>设置(S)</span><span>帮助(H)</span>
  </nav>

  <div class="row row1">
    <svg class="i"><use href="#cut"/></svg><svg class="i"><use href="#copy"/></svg><svg class="i"><use href="#paste"/></svg><svg class="i"><use href="#undo"/></svg><svg class="i"><use href="#redo"/></svg><i class="s"></i>
    <svg class="i"><use href="#bulb"/></svg><svg class="i"><use href="#zf"/></svg><svg class="i"><use href="#fun"/></svg><svg class="i"><use href="#task"/><text class="t tb" x="0" y="9" font-size="9">任</text><text class="t tr" x="13" y="9" font-size="10">!</text><text class="t tb" x="7" y="18" font-size="9">务</text></svg><svg class="i"><use href="#help"/></svg><svg class="i lay"><use href="#lay"/></svg><i class="drop"></i><i class="g"></i>
    <svg class="i"><use href="#pan"/></svg><svg class="i"><use href="#zw"/></svg><svg class="i"><use href="#zi"/></svg><svg class="i"><use href="#zd"/></svg><svg class="i"><use href="#rot"/></svg><svg class="i"><use href="#mv"/></svg><i class="s"></i>
    <svg class="i"><use href="#cw"/></svg><svg class="i"><use href="#ch"/></svg><svg class="i on"><use href="#cs"/></svg><i class="s"></i>
    <svg class="i"><use href="#g2box"/></svg><svg class="i"><use href="#g2box"/></svg><i class="s"></i>
    <svg class="i"><use href="#pen"/></svg><i class="g"></i>
    <svg class="i"><use href="#g1"/></svg><svg class="i"><use href="#g2"/></svg><svg class="i"><use href="#g3"/></svg><svg class="i"><use href="#g4"/></svg><svg class="i"><use href="#g5"/></svg><svg class="i"><use href="#g6"/></svg><svg class="i"><use href="#g7"/></svg><svg class="i"><use href="#g8"/></svg><svg class="i"><use href="#g9"/></svg><svg class="i"><use href="#g10"/></svg><svg class="i"><use href="#g11"/></svg><i class="s"></i>
    <svg class="i"><use href="#s1"/></svg><svg class="i"><use href="#s2"/></svg><svg class="i"><use href="#s3"/></svg><svg class="i"><use href="#s4"/></svg><svg class="i"><use href="#s5"/></svg><svg class="i"><use href="#s6"/></svg><svg class="i"><use href="#s7"/></svg><svg class="i"><use href="#s8"/></svg><i class="s"></i>
    <svg class="i"><use href="#dia"/></svg><i class="s"></i>
    <svg class="i"><use href="#h1"/></svg><svg class="i"><use href="#h2"/></svg><svg class="i"><use href="#h3"/></svg><i class="s"></i>
    <svg class="i"><use href="#dk"/></svg><svg class="i"><use href="#dg"/></svg>
  </div>

  <div class="row row2">
    <svg class="i"><use href="#bq"/></svg><svg class="i"><use href="#b1"/></svg><svg class="i"><use href="#b2"/></svg><svg class="i"><use href="#b3"/></svg><svg class="i"><use href="#b4"/></svg><svg class="i"><use href="#b5"/></svg><svg class="i"><use href="#b6"/></svg><i class="s"></i>
    <svg class="i"><use href="#p1"/></svg><svg class="i"><use href="#p2"/></svg><svg class="i"><use href="#p3"/></svg><svg class="i"><use href="#p4"/></svg><svg class="i"><use href="#p5"/></svg><svg class="i"><use href="#p6"/></svg><svg class="i"><use href="#p7"/></svg><svg class="i"><use href="#b5"/></svg><i class="s"></i>
    <svg class="i"><use href="#diao"/><text class="t tb" x="2" y="10" font-size="12">雕</text><text class="t tr" x="6" y="18" font-size="7">FL</text></svg><svg class="i"><use href="#diao"/><text class="t tb" x="2" y="10" font-size="12">雕</text><text class="t tr" x="6" y="18" font-size="7">YL</text></svg><svg class="i"><use href="#diao"/><text class="t tb" x="2" y="10" font-size="12">雕</text><text class="t tr" x="2" y="18" font-size="7">SZF</text></svg><i class="s"></i>
    <svg class="i"><use href="#c1"/></svg><svg class="i"><use href="#c2"/></svg><i class="s"></i>
    <svg class="i"><use href="#g01"/><text class="t tk" x="2" y="6" font-size="6.500">G01</text></svg><svg class="i"><use href="#c3"/></svg><svg class="i"><use href="#c4"/><text class="t tb" x="0" y="9" font-size="10">G</text></svg><svg class="i"><use href="#c5"/><text class="t tb" x="0" y="9" font-size="10">G</text></svg><i class="g"></i>
    <svg class="i"><use href="#a4"/><text class="t tb" x="0" y="8" font-size="11">4</text></svg><svg class="i"><use href="#a4b"/><text class="t tb" x="0" y="8" font-size="11">4</text></svg><svg class="i"><use href="#a4c"/><text class="t tb" x="0" y="8" font-size="11">4</text></svg><i class="s"></i>
    <svg class="i"><use href="#a5"/><text class="t tb" x="0" y="8" font-size="11">5</text></svg><svg class="i"><use href="#a5p"/><text class="t tb" x="0" y="8" font-size="11">5</text></svg><i class="s"></i>
    <svg class="i"><use href="#a5c"/><text class="t tb" x="0" y="8" font-size="11">5</text></svg><svg class="i"><use href="#a5d"/><text class="t tb" x="0" y="8" font-size="11">5</text></svg><i class="s"></i>
    <svg class="i"><use href="#a5f"/><text class="t tb" x="0" y="8" font-size="11">5</text></svg><svg class="i"><use href="#a5f"/><text class="t tb" x="0" y="8" font-size="11">5</text></svg><i class="s"></i>
    <svg class="i"><use href="#a5s"/><text class="t tb" x="0" y="9" font-size="11">5</text><text class="t tb" x="7" y="9" font-size="10">G</text></svg><svg class="i"><use href="#a5v"/><text class="t tb" x="0" y="8" font-size="11">5</text></svg><svg class="i"><use href="#a5v"/><text class="t tb" x="0" y="8" font-size="11">5</text></svg><i class="s"></i>
    <svg class="i"><use href="#a5h"/><text class="t tb" x="0" y="8" font-size="11">5</text></svg><svg class="i"><use href="#a5m"/><text class="t tb" x="0" y="8" font-size="11">5</text></svg><svg class="i"><use href="#a5l"/><text class="t tb" x="0" y="8" font-size="11">5</text></svg><svg class="i"><use href="#a5e"/><text class="t tb" x="0" y="8" font-size="11">5</text></svg><i class="s"></i>
    <svg class="i"><use href="#axd"/><text class="t tb" x="0" y="8" font-size="10">5</text><text class="t tb" x="12" y="18" font-size="8">4</text></svg><svg class="i"><use href="#axd"/><text class="t tb" x="0" y="8" font-size="10">3</text><text class="t tb" x="12" y="18" font-size="8">5</text></svg><i class="g"></i>
    <svg class="i"><use href="#t1"/><text class="t tb" x="0" y="8" font-size="8">3</text></svg><svg class="i"><use href="#t2"/><text class="t tb" x="0" y="8" font-size="8">3</text></svg><svg class="i"><use href="#t3"/><text class="t tb" x="0" y="8" font-size="8">3</text></svg><svg class="i"><use href="#t4"/><text class="t tb" x="0" y="8" font-size="8">3</text></svg><i class="s"></i>
    <svg class="i"><use href="#t5"/><text class="t tb" x="0" y="8" font-size="8">3</text></svg><svg class="i"><use href="#t6"/><text class="t tb" x="0" y="8" font-size="8">3</text></svg><svg class="i"><use href="#t7"/><text class="t tb" x="0" y="8" font-size="8">3</text></svg><i class="g"></i>
    <svg class="i"><use href="#hat"/></svg><i class="s"></i>
    <svg class="i"><use href="#gd"/></svg><i class="s"></i>
    <svg class="i"><use href="#ft"/></svg>
  </div>

  <main class="main">
    <aside class="leftstrip">
      <div class="vbar">
        <i class="vg"></i>
        <svg class="i on"><use href="#sel"/></svg><i class="vs"></i>
        <svg class="i"><use href="#lp"/></svg><i class="vs"></i>
        <svg class="i"><use href="#col"/></svg>
      </div>
      <div class="vbar">
        <i class="vg"></i>
        <svg class="i"><use href="#lv1"/></svg><svg class="i"><use href="#lv2"/></svg><i class="vs"></i>
        <svg class="i"><use href="#lv3"/></svg><svg class="i"><use href="#lv4"/></svg><i class="vs"></i>
        <svg class="i"><use href="#lv5"/></svg><svg class="i"><use href="#lv6"/></svg><i class="vs"></i>
        <svg class="i"><use href="#lv7"/></svg>
      </div>
    </aside>

    <section class="panel">
      <div class="panelhead"><span class="pname">轨迹管理</span><span class="pctl"><i class="tri"></i><span>✕</span></span></div>
      <div class="tree">
        <div class="node root"><svg class="ti r"><use href="#tr-root"/></svg><span>加工</span></div>
        <div class="kids">
          <div class="node"><i class="dash"></i><svg class="ti"><use href="#tr-model"/></svg><span>模型</span></div>
          <div class="node"><i class="dash"></i><svg class="ti"><use href="#tr-blank"/></svg><span>毛坯</span></div>
          <div class="node"><i class="dash"></i><svg class="ti"><use href="#tr-start"/></svg><span>起始点</span></div>
          <div class="node"><i class="dash"></i><svg class="ti"><use href="#tr-tool"/></svg><span>刀具库</span></div>
          <div class="node"><b class="plus"></b><i class="dash short"></i><svg class="ti"><use href="#tr-sys"/></svg><span>坐标系</span></div>
          <div class="node"><i class="dash"></i><svg class="ti"><use href="#tr-fold"/></svg><span>刀具轨迹 : 共 0 条</span></div>
        </div>
      </div>
      <div class="tabs">
        <svg class="tabshape" viewBox="0 0 200 22" aria-hidden="true">
          <path class="tabo" d="M2 0l10 20q1 1 3 1h32q2 0 3-1l2-4 3 4q1 1 3 1h36q2 0 3-1l3-5 2 5q1 1 3 1h32q2 0 3-1l2-3 3 3q1 1 3 1h30q3 0 4-2l8-19"/>
          <path class="tabw" d="M51 0l6 20q1 1 3 1h33q2 0 3-1l8-20z"/>
        </svg>
        <span class="tab">特征...</span><span class="tab">轨迹...</span><span class="tab">属性...</span><span class="tab">命令...</span>
      </div>
    </section>

    <section class="view">
      <svg class="axes" viewBox="0 0 60 60" aria-hidden="true">
        <path class="axr" d="M8.500 5.500v34h35M8.500 22.500l17 17"/>
        <text class="axt" x="9" y="4">Y</text>
        <text class="axt" x="9" y="40">Z</text>
        <text class="axt" x="43" y="40">X</text>
        <text class="axt sy" x="1" y="49">.sys.</text>
      </svg>
    </section>

    <aside class="rightstrip">
      <div class="rcol">
        <div class="vbar">
          <i class="vg"></i>
          <svg class="i"><use href="#r1"/></svg><svg class="i"><use href="#r2"/></svg><svg class="i"><use href="#r3"/></svg><svg class="i"><use href="#r4"/></svg><i class="vs"></i>
          <svg class="i"><use href="#r5"/></svg><svg class="i"><use href="#r6"/></svg>
        </div>
        <div class="vbar">
          <i class="vg"></i>
          <svg class="i"><use href="#r7"/><text class="t tk" x="10" y="8" font-size="6">z</text></svg><svg class="i"><use href="#r8"/></svg><i class="vs"></i>
          <svg class="i"><use href="#r9"/></svg><i class="vs"></i>
          <svg class="i"><use href="#r10"/></svg><svg class="i"><use href="#r11"/></svg><svg class="i"><use href="#r12"/></svg>
        </div>
      </div>
      <div class="rcol">
        <div class="vbar">
          <i class="vg"></i>
          <svg class="i"><use href="#q1"/></svg><svg class="i"><use href="#q2"/></svg><svg class="i"><use href="#q3"/></svg><svg class="i"><use href="#q4"/></svg><svg class="i"><use href="#q5"/></svg><svg class="i"><use href="#q6"/></svg><svg class="i"><use href="#q7"/></svg><svg class="i"><text class="t tk ser" x="0" y="14" font-size="12">f(x)</text></svg><svg class="i"><use href="#q9"/></svg><svg class="i"><use href="#q10"/></svg><svg class="i"><use href="#q11"/></svg><svg class="i"><use href="#q12"/></svg><svg class="i"><use href="#q13"/><text class="t tb" x="0" y="13" font-size="13">矢</text></svg><svg class="i"><use href="#q14"/></svg><svg class="i"><use href="#q15"/></svg><svg class="i"><use href="#q16"/></svg><i class="vs"></i>
          <svg class="i"><text class="t tk serb" x="1" y="15" font-size="17">A</text></svg><svg class="i"><use href="#tbg"/><text class="t tb serb" x="-1" y="8" font-size="10">A</text><text class="t tk serb" x="6" y="17" font-size="13">A</text></svg><i class="vs"></i>
          <svg class="i"><use href="#d1"/></svg><svg class="i"><use href="#d2"/></svg><svg class="i"><use href="#d3"/></svg><i class="vs"></i>
          <svg class="i"><use href="#d4"/></svg>
        </div>
      </div>
    </aside>
  </main>

  <footer class="status">
    <span class="st st1">命令</span><span class="st st2">工具状态</span><span class="st st3">65.634,-27.887,0.000</span><span class="st st4"></span>
  </footer>

  <div class="row row3">
    <svg class="i"><use href="#bell"/></svg><svg class="i"><use href="#four"/></svg><svg class="i"><use href="#ovl"/></svg><i class="g"></i>
    <svg class="i"><use href="#era"/></svg><i class="s"></i>
    <svg class="i"><use href="#v1"/></svg><svg class="i"><use href="#v2"/></svg><svg class="i"><use href="#v3"/></svg><svg class="i"><use href="#v4"/></svg><svg class="i"><use href="#v5"/></svg><svg class="i"><use href="#v6"/></svg><i class="s"></i>
    <svg class="i"><use href="#v7"/></svg><svg class="i"><use href="#v8"/></svg><svg class="i"><use href="#v9"/></svg><i class="s"></i>
    <svg class="i"><use href="#v10"/></svg><svg class="i"><use href="#sf1"/></svg><svg class="i"><use href="#sf2"/></svg><svg class="i"><use href="#sf3"/></svg><svg class="i"><use href="#sf4"/></svg><svg class="i"><use href="#sf5"/></svg><svg class="i"><use href="#sf6"/></svg><svg class="i"><use href="#sf7"/></svg><svg class="i"><use href="#sf8"/></svg><i class="g"></i>
    <svg class="i"><use href="#e1"/></svg><svg class="i"><use href="#e2"/></svg><svg class="i"><use href="#e3"/></svg><svg class="i"><use href="#e4"/></svg><svg class="i"><use href="#e5"/></svg><svg class="i"><use href="#e6"/></svg><svg class="i"><use href="#e7"/></svg><svg class="i"><use href="#e8"/></svg><svg class="i"><use href="#e9"/></svg><svg class="i"><use href="#e10"/></svg>
  </div>

  <div class="upload">
    <span class="uplogo"><svg class="cloud"><use href="#cloud"/></svg></span>
    <span class="uptext">拖拽上传</span>
  </div>

  <svg class="banner" viewBox="0 0 160 160">
    <path class="bred" d="M5 5H155L5 153z"/>
    <text class="b9" transform="translate(20 67) rotate(-45)">9SUG</text>
    <text class="bw" transform="translate(18 129) rotate(-45)">学UG就上UG网</text>
  </svg>

  <div class="ime">
    <div class="imer">
      <svg class="imup"><use href="#im-up"/></svg><span class="imname">五笔拼音</span><svg class="immoon"><use href="#im-moon"/></svg><span class="imdots">°,</span>
    </div>
    <div class="imer imr2">
      <svg class="imhand"><use href="#im-hand"/></svg><svg class="immag"><use href="#im-mag"/></svg><span class="imz">简</span><span class="imz">GB</span><span class="imk"></span>
    </div>
  </div>
</div>
</body>
</html>
```

FILE: styles.css
```css
* { box-sizing: border-box; }
html, body { margin: 0; height: 100%; overflow: hidden; }
body { font: 12px "Noto Sans CJK SC", "Liberation Sans", sans-serif; color: #222; background: #e9e9e9; }
.defs { display: block; width: 0; height: 0; }

/* svg paint classes */
.k { fill: none; stroke: #000; }
.k2 { fill: none; stroke: #000; stroke-width: 1.6; }
.w { fill: #fff; stroke: #000; }
.nv { fill: none; stroke: #002080; }
.nw { fill: #fff; stroke: #002080; }
.ol { fill: #b4ad7c; stroke: #000; }
.gs { fill: none; stroke: #808080; }
.gs2 { fill: none; stroke: #8a8a8a; stroke-width: 2; }
.gw { fill: #f6f6f6; stroke: #808080; }
.y { fill: #ffef40; stroke: #000; }
.c { fill: #30e0e8; stroke: #000; }
.cb { fill: none; stroke: #109cc0; stroke-width: 2.4; }
.lb { fill: #9ccdf2; stroke: #1058c0; }
.lbk { fill: #cfe5f8; stroke: #000; }
.bs { fill: none; stroke: #1058c0; }
.bl { fill: #0040e0; }
.bl2 { fill: none; stroke: #0000e0; stroke-width: 1.4; }
.rs { fill: none; stroke: #e00000; }
.rs2 { fill: none; stroke: #e00000; stroke-width: 1.5; }
.gs3 { fill: none; stroke: #108010; }
.gs3w { fill: #fff; stroke: #108010; stroke-width: 1.4; }
.ty { fill: #ffef40; stroke: #000; }
.t { font-family: "Liberation Sans", "Noto Sans CJK SC", sans-serif; }
.ser { font-family: "Liberation Serif", serif; }
.serb { font-family: "Liberation Serif", serif; font-weight: 700; }
.tb { fill: #1040c0; }
.tr { fill: #e00000; }
.tk { fill: #000; }

.app { position: relative; display: flex; flex-direction: column; width: 1440px; height: 859px; overflow: hidden; }

/* title */
.titlebar { flex: 0 0 23px; display: flex; align-items: center; background: #b9bf6f; border-bottom: 1px solid #a3a862; padding-left: 2px; }
.appicon { width: 16px; height: 16px; border: 1px solid #333; background: #e8e8c8; flex: none; }
.title { flex: 1; margin: 0; font: 400 15px/22px "Open Sans", "Noto Sans CJK SC", sans-serif; letter-spacing: .25px; color: #4a4a2c; text-align: center; padding-left: 82px; white-space: nowrap; }
.winbtns { display: flex; align-self: flex-start; flex: none; width: 101px; height: 20px; }
.wb { flex: 0 0 26px; height: 17px; display: flex; align-items: center; justify-content: center; color: #222; }
.wb:nth-child(2) { margin-right: 17px; }
.wclose { flex: 0 0 32px; height: 20px; background: #c75050; color: #fff; font-size: 11px; line-height: 20px; }
.wmin { width: 9px; height: 3px; background: #222; margin-top: 4px; }
.wres { width: 9px; height: 9px; border: 1px solid #222; border-top-width: 2px; background: #b9bf6f; box-shadow: 2px -2px 0 -1px #b9bf6f, 2px -2px 0 0 #222; }

/* menu */
.menubar { flex: 0 0 24px; display: flex; padding-left: 127px; background: #e9e9e9; color: #333; line-height: 22px; }
.menubar span { margin-right: 16.5px; white-space: nowrap; }

/* toolbars */
.row { display: flex; align-items: center; flex: none; }
.row1 { width: 1255px; height: 26px; padding-left: 98px; background: linear-gradient(#f3f3f3, #fbfbfb 40%, #ededed 65%, #c6c6c6); border-radius: 4px 4px 0 0; }
.row2 { width: 1347px; height: 26px; padding-left: 62px; background: linear-gradient(#f6f6f6, #fbfbfb 40%, #ececec 65%, #c2c2c2); }
.row3 { width: 850px; height: 25px; padding-left: 98px; background: linear-gradient(#f9f9f9, #f3f3f3 50%, #c4c4c4); }
.i { flex: none; display: block; width: 18px; height: 18px; margin: 2px; overflow: visible; }
.i.on { background: #cfe6fb; outline: 1px solid #4a9bea; outline-offset: 1px; }
.s { flex: none; width: 8px; height: 20px; background: linear-gradient(#c8c8c8, #c8c8c8) center / 1px 100% no-repeat; }
.g { flex: none; width: 12px; height: 20px; background: repeating-linear-gradient(#a8a8a8 0 2px, transparent 2px 4px) 4px 0 / 2px 100% no-repeat; }
.lay { margin-left: 4px; margin-right: 0; }
.drop { flex: none; width: 0; height: 0; margin: 2px 2px 0 4px; border: 3px solid transparent; border-top: 4px solid #000; border-bottom: 0; }

/* main */
.main { flex: 1; min-height: 0; display: flex; margin-top: 1px; background: #d8d8d8; }
.leftstrip { flex: 0 0 26px; padding: 77px 0 0 2px; display: flex; flex-direction: column; gap: 2px; }
.vbar { width: 23px; display: flex; flex-direction: column; align-items: center; background: linear-gradient(90deg, #f4f4f4, #f8f8f8 55%, #c4c4c4); border-radius: 3px; padding-bottom: 2px; }
.vg { flex: none; width: 14px; height: 8px; background: repeating-linear-gradient(90deg, #a8a8a8 0 2px, transparent 2px 4px) 0 3px / 100% 2px no-repeat; }
.vs { flex: none; width: 18px; height: 8px; background: linear-gradient(#c8c8c8, #c8c8c8) center / 100% 1px no-repeat; }

.panel { flex: 0 0 200px; display: flex; flex-direction: column; background: #fff; }
.panelhead { flex: 0 0 18px; display: flex; justify-content: space-between; align-items: center; background: #b8b8b8; border-top: 1px solid #a8a8a8; color: #fff; font-size: 14px; line-height: 15px; padding: 0 5px 1px 1px; }
.pctl { display: flex; align-items: center; gap: 8px; font-size: 11px; }
.tri { width: 0; height: 0; border: 4px solid transparent; border-top: 5px solid #fff; border-bottom: 0; }
.tree { flex: 1; }
.node { display: flex; align-items: center; height: 20px; line-height: 20px; color: #222; white-space: nowrap; word-spacing: 1.5px; }
.node span { margin-left: 4px; }
.root { padding-left: 3px; }
.root span { margin-left: 1px; }
.kids { margin-left: 10px; background: repeating-linear-gradient(#808080 0 1px, transparent 1px 2px) 0 0 / 1px 111px no-repeat; }
.ti { width: 18px; height: 18px; flex: none; overflow: visible; }
.ti.r { width: 20px; height: 20px; }
.dash { flex: none; width: 13px; height: 1px; margin-right: 1px; background: repeating-linear-gradient(90deg, #808080 0 1px, transparent 1px 2px); }
.dash.short { width: 8px; }
.plus { flex: none; width: 9px; height: 9px; margin-left: -5px; margin-right: 1px; background: linear-gradient(#000, #000) center / 5px 1px no-repeat, linear-gradient(#000, #000) center / 1px 5px no-repeat, #fff; border: 1px solid #808080; }
.tabs { position: relative; flex: 0 0 22px; display: flex; background: #e4e4e4; padding: 1px 0 0 16px; line-height: 20px; }
.tabshape { position: absolute; left: 0; top: 0; width: 200px; height: 22px; }
.tabo { fill: #ececec; stroke: #a0a0a0; }
.tabw { fill: #f4f4f4; stroke: #a0a0a0; }
.tab { position: relative; width: 46px; color: #222; white-space: nowrap; }

.view { position: relative; flex: 0 0 1154px; margin-left: 6px; background: linear-gradient(#000, #0079b8); }
.axes { position: absolute; left: 568px; top: 316px; width: 60px; height: 60px; overflow: visible; }
.axr { fill: none; stroke: #f00000; stroke-width: 1; }
.axt { fill: #c8d4dc; font: 13px "Liberation Sans", sans-serif; }
.sy { letter-spacing: 2.5px; font-size: 12px; }

.rightstrip { flex: 1; display: flex; gap: 3px; padding: 77px 0 0 4px; background: #eeeeee; }
.rcol { display: flex; flex-direction: column; gap: 1px; align-self: flex-start; }
.rcol .vbar { width: 23px; }
.rcol:last-child .vbar { width: 22px; }

/* status */
.status { flex: 0 0 23px; display: flex; border-top: 2px solid #fff; background: #f0f0f0; color: #777; line-height: 20px; }
.st { display: block; flex: none; border-right: 1px solid #d0d0d0; padding-left: 5px; height: 20px; }
.st1 { width: 825px; padding-left: 33px; color: #444; }
.st2 { width: 187px; font-size: 13px; }
.st3 { width: 370px; font-family: "Liberation Sans", sans-serif; font-size: 11px; }
.st4 { width: 10px; border-right: 0; }

/* overlays */
.upload { position: absolute; left: 1229px; top: 27px; width: 104px; height: 25px; display: flex; border: 1px solid #4a9fd8; border-radius: 3px; overflow: hidden; box-shadow: 0 1px 1px #8fb8d8; }
.uplogo { flex: 0 0 30px; display: flex; align-items: center; justify-content: center; background: #2a90dc; }
.cloud { width: 22px; height: 22px; }
.uptext { flex: 1; text-align: center; line-height: 24px; color: #5a7f9c; background: linear-gradient(#d8eef9, #a8dcf4); }

.banner { position: absolute; left: 0; top: 0; width: 160px; height: 160px; }
.bred { fill: #f00000; }
.b9 { font: 400 26px "Liberation Sans", sans-serif; fill: #000; stroke: #000; stroke-width: .4px; }
.bw { font: 700 22px "Liberation Sans", "Noto Sans CJK SC", sans-serif; fill: #fff; }

.ime { position: absolute; left: 1px; top: 821px; width: 103px; height: 38px; background: #0b6518; border-radius: 3px 3px 0 0; color: #fff; padding: 1px 0 0; }
.imer { display: flex; align-items: center; height: 18px; }
.imup { flex: none; width: 8px; height: 10px; margin: 0 4px 0 4px; }
.imname { flex: none; width: 55px; height: 18px; line-height: 17px; text-align: center; background: #0a5a16; border: 1px solid #1b8a2c; }
.immoon { flex: none; width: 9px; height: 9px; margin-left: 7px; }
.imdots { margin-left: 6px; font: 700 12px/12px "Liberation Sans", sans-serif; }
.imr2 { margin-top: 1px; }
.imhand { flex: none; width: 13px; height: 15px; margin-left: 6px; }
.immag { flex: none; width: 14px; height: 14px; margin-left: 6px; }
.imz { flex: none; color: #cde8cf; font-size: 12px; width: 14px; text-align: center; margin-left: 3px; }
.imz + .imz { margin-left: 5px; }
.imk { flex: none; width: 18px; height: 12px; margin-left: 5px; background: repeating-linear-gradient(90deg, #2a7a34 0 2px, #0b5a18 2px 3px); border: 1px solid #3f9248; }
```
